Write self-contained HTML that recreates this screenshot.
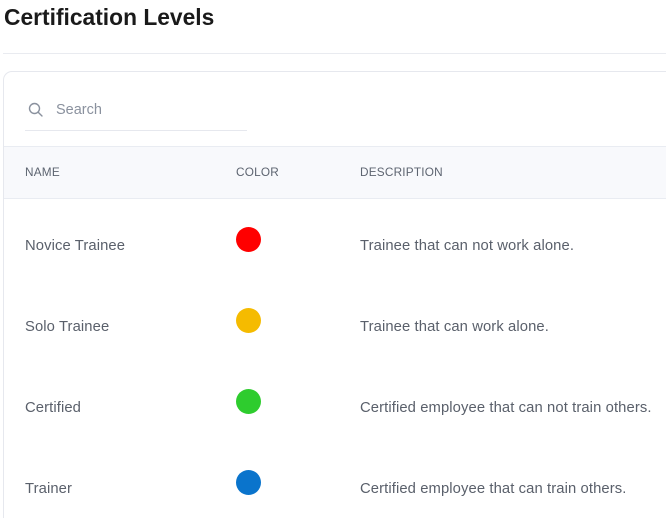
<!DOCTYPE html>
<html><head><style>
html,body{margin:0;padding:0;background:#fff;font-family:"Liberation Sans",sans-serif;}
#w{position:relative;width:666px;height:518px;overflow:hidden;}
h1{position:absolute;left:4px;top:4px;margin:0;font-size:22.8px;font-weight:bold;color:#1a1a1a;}
.hr{position:absolute;left:3px;top:53px;width:663px;height:1px;background:#e9ebf0;}
.card{position:absolute;left:3px;top:71px;width:663px;height:447px;border:1px solid #e6e8ee;border-right:none;border-bottom:none;border-radius:9px 0 0 0;box-sizing:border-box;overflow:hidden;}
.search{position:absolute;left:21px;top:0;width:222px;height:58px;border-bottom:1px solid #e6e8ee;}
.search span{position:absolute;left:31px;top:30px;font-size:14.5px;color:#8a919e;}
.search svg{position:absolute;left:3px;top:30px;}
.thead{position:absolute;left:0;top:74px;width:100%;height:51px;background:#f8f9fc;border-top:1px solid #e9ecf2;border-bottom:1px solid #e9ecf2;}
.th{position:absolute;top:18px;font-size:11.8px;color:#5d6470;letter-spacing:0.2px;}
.td{position:absolute;font-size:14.8px;color:#5a606b;letter-spacing:0.1px;white-space:nowrap;}
.dot{position:absolute;width:25px;height:25px;border-radius:50%;}
</style></head><body><div id="w">
<h1>Certification Levels</h1>
<div class="hr"></div>
<div class="card">
 <div class="search">
  <svg width="16" height="16" viewBox="0 0 16 16"><circle cx="6.5" cy="6.5" r="5" fill="none" stroke="#8a919e" stroke-width="1.4"/><line x1="10.2" y1="10.2" x2="14" y2="14" stroke="#8a919e" stroke-width="1.4" stroke-linecap="round"/></svg>
  <span>Search</span>
 </div>
 <div class="thead">
  <div class="th" style="left:21px">NAME</div>
  <div class="th" style="left:232px">COLOR</div>
  <div class="th" style="left:356px">DESCRIPTION</div>
 </div>
</div>
<div class="td" style="left:25px;top:238px">Novice Trainee</div>
<div class="dot" style="left:236px;top:227px;background:#ff0000"></div>
<div class="td" style="left:360px;top:238px">Trainee that can not work alone.</div>
<div class="td" style="left:25px;top:319px">Solo Trainee</div>
<div class="dot" style="left:236px;top:308px;background:#f5bb00"></div>
<div class="td" style="left:360px;top:319px">Trainee that can work alone.</div>
<div class="td" style="left:25px;top:400px">Certified</div>
<div class="dot" style="left:236px;top:389px;background:#2ecc2e"></div>
<div class="td" style="left:360px;top:400px">Certified employee that can not train others.</div>
<div class="td" style="left:25px;top:481px">Trainer</div>
<div class="dot" style="left:236px;top:470px;background:#0a74cc"></div>
<div class="td" style="left:360px;top:481px">Certified employee that can train others.</div>
</div></body></html>
